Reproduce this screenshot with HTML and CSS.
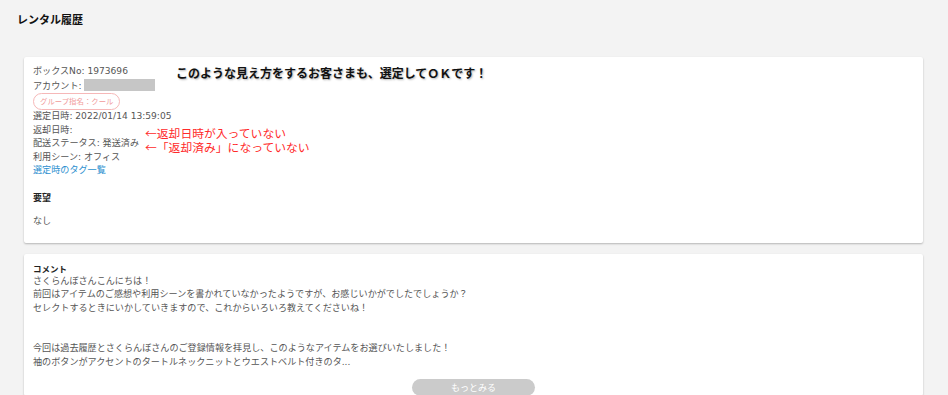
FILE: index.html
```html
<!DOCTYPE html>
<html lang="ja">
<head>
    <meta charset="UTF-8">
    <title>レンタル履歴</title>
    <link rel="stylesheet" href="styles.css">
</head>
<body>
<h1 class="page-title">レンタル履歴</h1>
<div class="list">
    <div class="card box-card">
        <p>ボックスNo: 1973696</p>
        <p>アカウント: <span class="masked"></span></p>
        <span class="group-tag">グループ指名：クール</span>
        <p>選定日時: 2022/01/14 13:59:05</p>
        <p>返却日時:</p>
        <p>配送ステータス: 発送済み</p>
        <p>利用シーン: オフィス</p>
        <a class="tag-link" href="#">選定時のタグ一覧</a>
        <h3 class="sub-title">要望</h3>
        <p class="request">なし</p>

        <!-- 注釈 -->
        <div class="note-main">このような見え方をするお客さまも、選定してＯＫです！</div>
        <div class="note-red">
            <div>←返却日時が入っていない</div>
            <div>←「返却済み」になっていない</div>
        </div>
    </div>
    <div class="card comment-card">
        <h3 class="comment-title">コメント</h3>
        <p>さくらんぼさんこんにちは！</p>
        <p>前回はアイテムのご感想や利用シーンを書かれていなかったようですが、お感じいかがでしたでしょうか？</p>
        <p>セレクトするときにいかしていきますので、これからいろいろ教えてくださいね！</p>
        <p>&nbsp;</p>
        <p>&nbsp;</p>
        <p>今回は過去履歴とさくらんぼさんのご登録情報を拝見し、このようなアイテムをお選びいたしました！</p>
        <p>袖のボタンがアクセントのタートルネックニットとウエストベルト付きのタ...</p>
        <div class="more-wrap">
            <button class="more-btn">もっとみる</button>
        </div>
    </div>
</div>
</body>
</html>
```

FILE: styles.css
```css
*{
    margin: 0;
    padding: 0;
    box-sizing: border-box;
}
body{
    background: #f3f3f3;
    font-family: "DejaVu Sans", "Noto Sans CJK JP", sans-serif;
    color: #555;
    font-size: 9.1px;
}
.page-title{
    font-family: "Noto Sans CJK JP", sans-serif;
    font-size: 11px;
    line-height: 14px;
    color: #111;
    padding: 12px 0 0 17px;
    height: 57px;
}
.list{
    padding: 0 25px 0 24px;
}
.card{
    background: #fff;
    border-radius: 2px;
    box-shadow: 0 1px 2px rgba(0, 0, 0, .25);
    padding: 8px 9px 14px;
    position: relative;
}
.card p{
    line-height: 13.5px;
}
.masked{
    display: inline-block;
    width: 71px;
    height: 12px;
    background: #c6c6c6;
    vertical-align: -2px;
}
.group-tag{
    display: inline-block;
    height: 17px;
    line-height: 15px;
    padding: 0 6px;
    border: 1px solid #f6b8b8;
    border-radius: 9px;
    color: #f19a9a;
    font-size: 7.4px;
}
.tag-link{
    display: block;
    color: #2c8fcf;
    text-decoration: none;
    line-height: 13.5px;
}
.sub-title{
    font-family: "Noto Sans CJK JP", sans-serif;
    font-size: 9px;
    line-height: 14px;
    color: #222;
    margin-top: 13.5px;
}
.request{
    margin-top: 10px;
}
.note-main{
    position: absolute;
    left: 152px;
    top: 9px;
    font-family: "Noto Sans CJK JP", sans-serif;
    font-size: 12px;
    line-height: 14px;
    font-weight: bold;
    color: #111;
    text-shadow: 1px 1px 2px rgba(0, 0, 0, .3);
}
.note-red{
    position: absolute;
    left: 121px;
    top: 69px;
    font-family: "Noto Sans CJK JP", sans-serif;
    font-size: 11.8px;
    line-height: 14px;
    color: #ff2a2a;
}
.comment-card{
    margin-top: 11px;
    padding-bottom: 0;
}
.comment-title{
    font-family: "Noto Sans CJK JP", sans-serif;
    font-size: 8.5px;
    line-height: 13px;
    color: #222;
}
.more-wrap{
    display: flex;
    justify-content: center;
    margin-top: 10px;
}
.more-btn{
    width: 123px;
    height: 17px;
    border: none;
    border-radius: 9px;
    background: #cbcbcb;
    color: #fff;
    font-family: "Noto Sans CJK JP", sans-serif;
    font-size: 9px;
}
```
